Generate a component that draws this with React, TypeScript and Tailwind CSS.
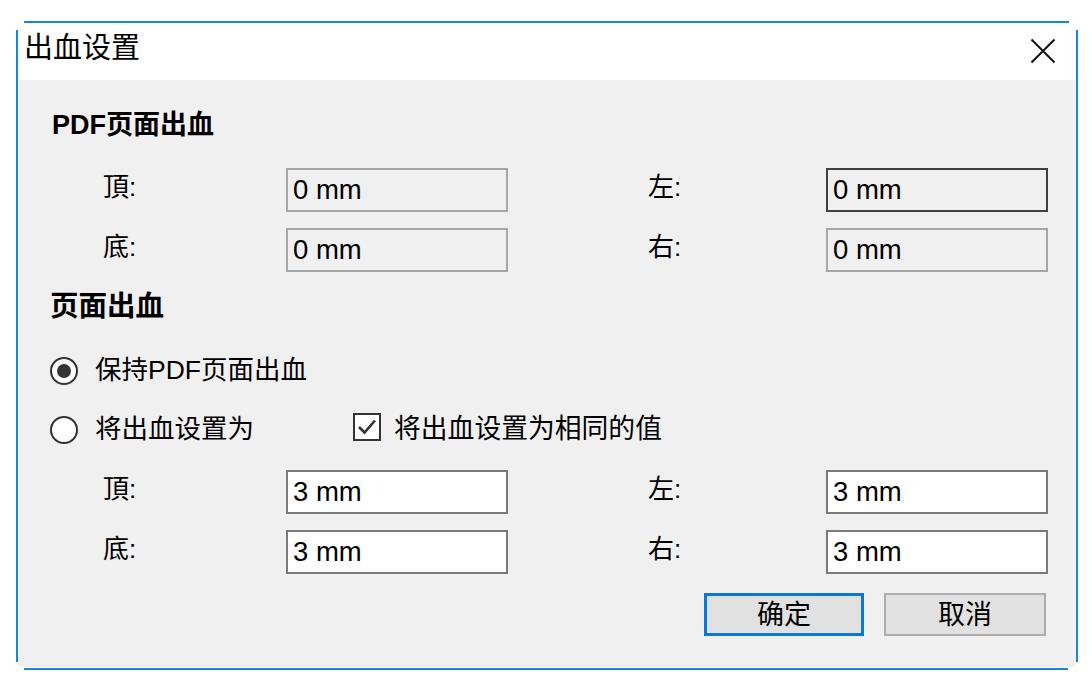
import React from "react";

const FONT = { fontFamily: '"Liberation Sans", "Noto Sans CJK SC", sans-serif' };

function Field({ value, variant }: { value: string; variant: "disabled" | "focus" | "normal" }) {
  const cls =
    variant === "disabled"
      ? "bg-[#f0f0f0] border-[#a6a6a6]"
      : variant === "focus"
      ? "bg-[#f0f0f0] border-[#3f3f3f]"
      : "bg-white border-[#7a7a7a]";
  return (
    <div className={`w-[222px] h-[44px] border-2 ${cls} flex items-center pl-[5px] text-[27.5px] text-black`}>
      {value}
    </div>
  );
}

function Row({
  l1,
  v1,
  k1,
  l2,
  v2,
  k2,
}: {
  l1: string;
  v1: string;
  k1: "disabled" | "focus" | "normal";
  l2: string;
  v2: string;
  k2: "disabled" | "focus" | "normal";
}) {
  return (
    <div className="flex items-center h-[44px] pl-[85px]">
      <div className="w-[183px] text-[26px] leading-[30px] -mt-[6px]">{l1}</div>
      <Field value={v1} variant={k1} />
      <div className="w-[140px]" />
      <div className="w-[178px] text-[26px] leading-[30px] -mt-[6px]">{l2}</div>
      <Field value={v2} variant={k2} />
    </div>
  );
}

export default function App() {
  return (
    <div className="w-[1092px] h-[688px] bg-white overflow-hidden" style={FONT}>
      <div className="ml-[24px] mt-[21px] w-[1045px] h-[2px] bg-[#1a86d9]" />
      <div className="ml-[16px] w-[1062px] flex flex-col">
        <div className="h-[7px] mx-[2px] bg-white" />
        <div className="border-x-2 border-[#1a86d9] flex flex-col h-[632px]">
          <div className="h-[50px] bg-white flex items-start justify-between">
            <div className="pl-[6px] pt-[0px] text-[29px] leading-[36px] text-black">出血设置</div>
            <div className="mr-[20px] mt-[8px]">
              <svg width="26" height="26" viewBox="0 0 26 26">
                <path d="M1.5 1.5 L24.5 24.5 M24.5 1.5 L1.5 24.5" stroke="#111" strokeWidth="2" fill="none" />
              </svg>
            </div>
          </div>
          <div className="flex-1 bg-[#f0f0f0] flex flex-col text-black">
            <div className="mt-[30px] pl-[34px] h-[30px] text-[27px] leading-[30px] font-bold">PDF页面出血</div>
            <div className="mt-[28px]">
              <Row l1="頂:" v1="0 mm" k1="disabled" l2="左:" v2="0 mm" k2="focus" />
            </div>
            <div className="mt-[16px]">
              <Row l1="底:" v1="0 mm" k1="disabled" l2="右:" v2="0 mm" k2="disabled" />
            </div>
            <div className="mt-[19px] pl-[32px] h-[30px] text-[28.5px] leading-[30px] font-bold">页面出血</div>
            <div className="mt-[35px] pl-[32px] h-[30px] flex items-center">
              <div className="w-[28px] h-[28px] rounded-full border-2 border-[#333] bg-white flex items-center justify-center">
                <div className="w-[14px] h-[14px] rounded-full bg-[#333]" />
              </div>
              <div className="ml-[17px] text-[26.5px] leading-[30px] -mt-[2px]">保持PDF页面出血</div>
            </div>
            <div className="mt-[29px] pl-[32px] h-[30px] flex items-center">
              <div className="w-[28px] h-[28px] rounded-full border-2 border-[#333] bg-white" />
              <div className="ml-[17px] w-[258px] text-[26.5px] leading-[30px] -mt-[2px]">将出血设置为</div>
              <div className="w-[28px] h-[28px] border-2 border-[#333] bg-white flex items-center justify-center -mt-[6px]">
                <svg width="22" height="22" viewBox="0 0 22 22">
                  <path d="M3 11 L8.5 16.5 L19 4.5" stroke="#333" strokeWidth="2.6" fill="none" />
                </svg>
              </div>
              <div className="ml-[13px] text-[26.8px] leading-[30px] -mt-[2px]">将出血设置为相同的值</div>
            </div>
            <div className="mt-[25px]">
              <Row l1="頂:" v1="3 mm" k1="normal" l2="左:" v2="3 mm" k2="normal" />
            </div>
            <div className="mt-[16px]">
              <Row l1="底:" v1="3 mm" k1="normal" l2="右:" v2="3 mm" k2="normal" />
            </div>
            <div className="mt-[19px] flex pl-[686px] gap-[20px]">
              <div className="w-[160px] h-[43px] bg-[#e1e1e1] border-[3px] border-[#0a78d7] flex items-center justify-center text-[27px] leading-[30px]">
                确定
              </div>
              <div className="w-[162px] h-[43px] bg-[#e1e1e1] border-2 border-[#adadad] flex items-center justify-center text-[27px] leading-[30px]">
                取消
              </div>
            </div>
          </div>
        </div>
        <div className="h-[5px] mx-[2px] bg-[#f0f0f0] rounded-b-[4px]" />
      </div>
      <div className="ml-[24px] mt-[1px] w-[1044px] h-[2px] bg-[#1a86d9]" />
    </div>
  );
}
